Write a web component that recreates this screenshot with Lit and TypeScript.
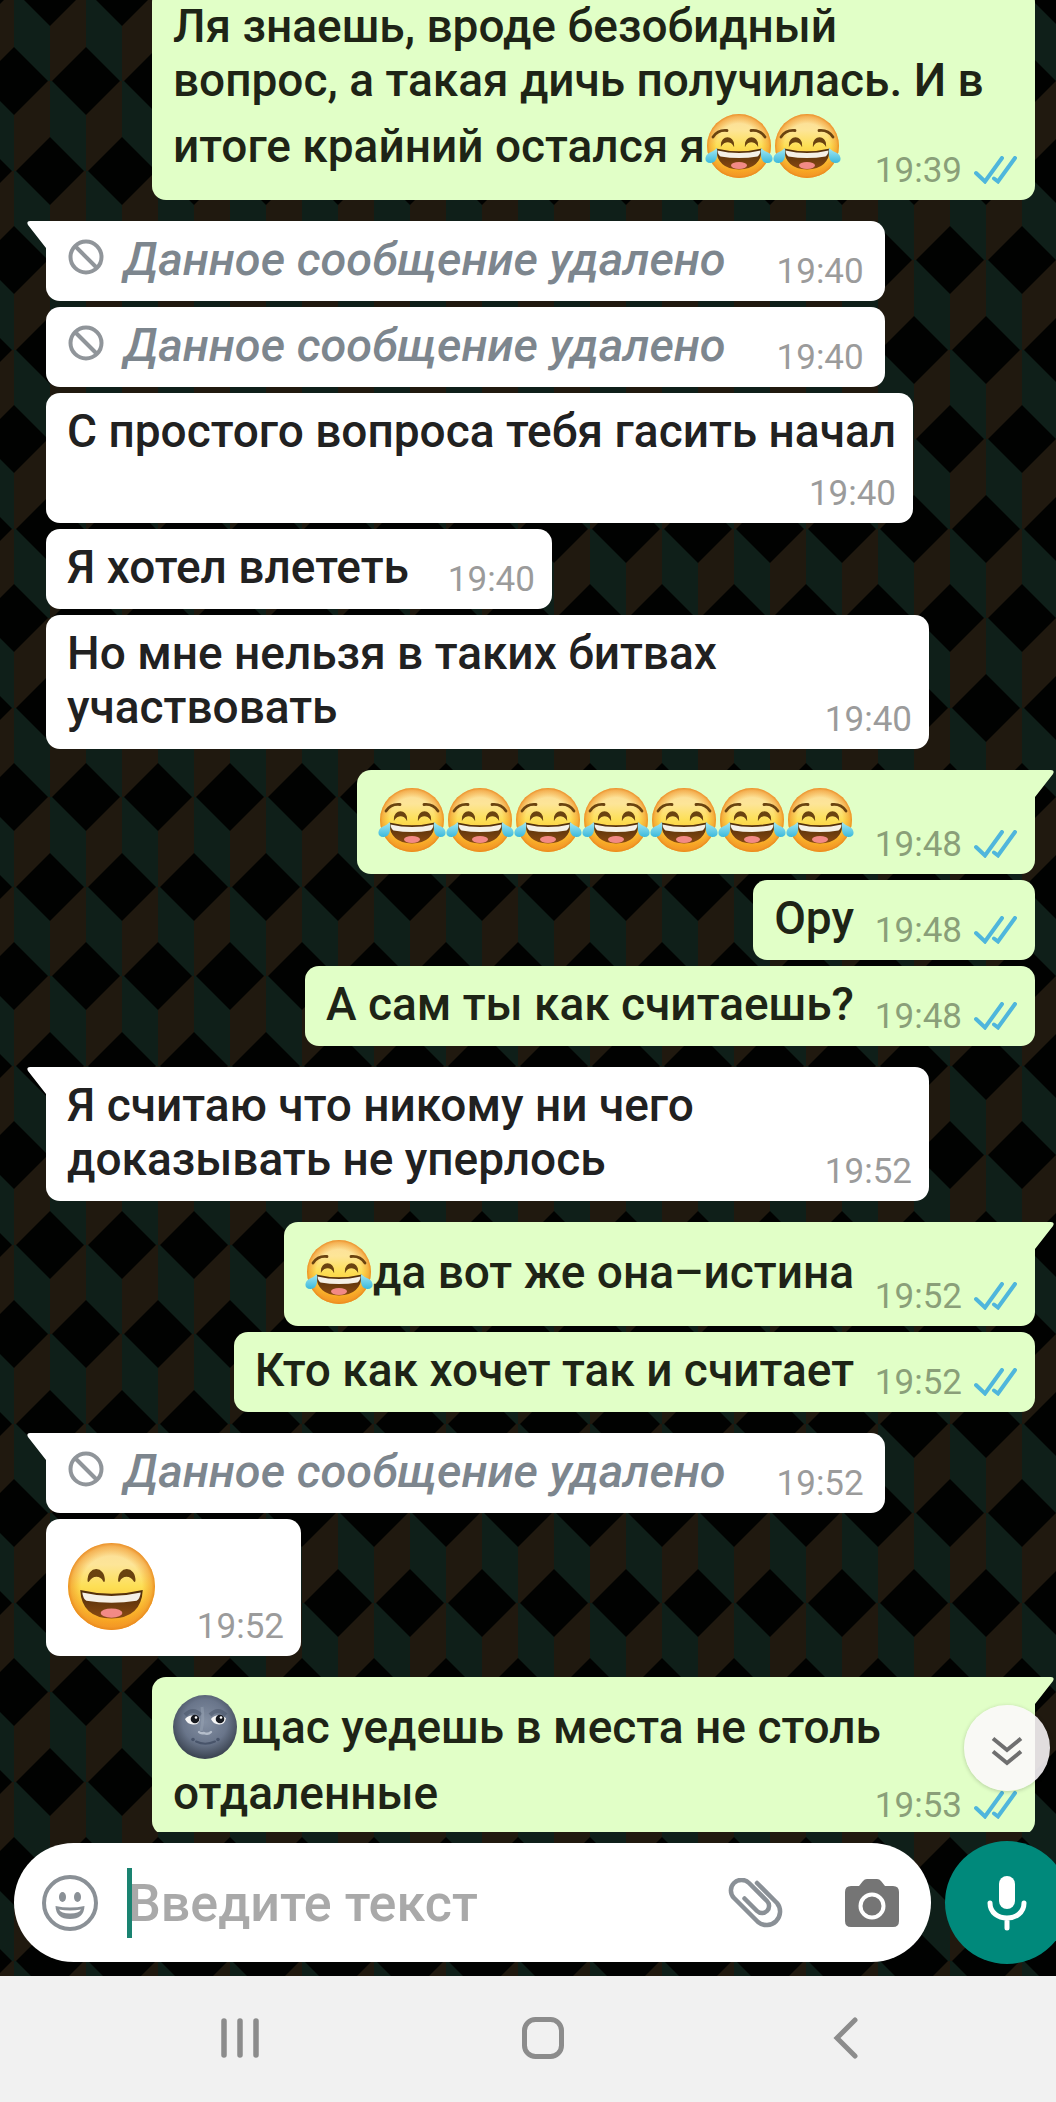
import { LitElement, html, css, svg, nothing } from "lit";
import { customElement, property } from "lit/decorators.js";
import { classMap } from "lit/directives/class-map.js";

interface Message {
  side: "in" | "out";
  time: string;
  text?: string;
  first?: boolean;
  deleted?: boolean;
  stacked?: boolean;
  big?: boolean;
  wide?: boolean;
}

const MESSAGES: Message[] = [
  { side: "out", time: "19:39", wide: true, text: "Ля знаешь, вроде безобидный\nвопрос, а такая дичь получилась. И в\nитоге крайний остался я😂😂" },
  { side: "in", time: "19:40", first: true, deleted: true },
  { side: "in", time: "19:40", deleted: true },
  { side: "in", time: "19:40", stacked: true, text: "С простого вопроса тебя гасить начал" },
  { side: "in", time: "19:40", text: "Я хотел влететь" },
  { side: "in", time: "19:40", text: "Но мне нельзя в таких битвах участвовать" },
  { side: "out", time: "19:48", first: true, text: "😂😂😂😂😂😂😂" },
  { side: "out", time: "19:48", text: "Ору" },
  { side: "out", time: "19:48", text: "А сам ты как считаешь?" },
  { side: "in", time: "19:52", first: true, text: "Я считаю что никому ни чего доказывать не уперлось" },
  { side: "out", time: "19:52", first: true, text: "😂да вот же она–истина" },
  { side: "out", time: "19:52", text: "Кто как хочет так и считает" },
  { side: "in", time: "19:52", first: true, deleted: true },
  { side: "in", time: "19:52", big: true, text: "😄" },
  { side: "out", time: "19:53", first: true, text: "🌚щас уедешь в места не столь отдаленные" },
];

const faceDefs = svg`
  <defs>
    <linearGradient id="skin" x1="0" y1="0" x2="0" y2="1">
      <stop offset="0" stop-color="#fbdc98"/><stop offset="0.25" stop-color="#fde598"/>
      <stop offset="0.5" stop-color="#fddf55"/><stop offset="0.75" stop-color="#fcc233"/><stop offset="1" stop-color="#f8981c"/>
    </linearGradient>
    <radialGradient id="rim" cx="0.5" cy="0.5" r="0.5">
      <stop offset="0.7" stop-color="#f39a1d" stop-opacity="0"/><stop offset="0.92" stop-color="#f0962a" stop-opacity="0.6"/><stop offset="1" stop-color="#e8861c" stop-opacity="0.9"/>
    </radialGradient>
    <linearGradient id="tear" x1="0" y1="0" x2="0" y2="1">
      <stop offset="0" stop-color="#a4e8f2"/><stop offset="1" stop-color="#3bb9dc"/>
    </linearGradient>
    <linearGradient id="mouth" x1="0" y1="0" x2="0" y2="1">
      <stop offset="0" stop-color="#4d2c08"/><stop offset="1" stop-color="#8a4a12"/>
    </linearGradient>
    <radialGradient id="moon" cx="0.5" cy="0.42" r="0.58">
      <stop offset="0" stop-color="#8490a3"/><stop offset="0.6" stop-color="#69758a"/><stop offset="1" stop-color="#39424f"/>
    </radialGradient>
  </defs>`;

const grin = svg`
  <circle cx="34" cy="34" r="32" fill="url(#skin)"/>
  <circle cx="34" cy="34" r="32" fill="url(#rim)"/>
  <path d="M11 36.500 Q34 42 57 36.500 Q56 57 34 57.500 Q12 57 11 36.500Z" fill="url(#mouth)"/>
  <path d="M12.500 38.500 Q34 43.500 55.500 38.500 Q55 43 52.500 44.500 Q34 47.500 15.500 44.500 Q13 43 12.500 38.500Z" fill="#f5f0e6"/>
  <ellipse cx="34" cy="53.500" rx="8" ry="3.400" fill="#f28a86"/>`;

function emoji(char: string) {
  if (char === "🌚") {
    return html`<svg class="emoji" viewBox="0 0 68 68" role="img" aria-label="🌚">${faceDefs}${svg`
      <circle cx="32" cy="34" r="32" fill="url(#moon)"/>
      <path d="M12 22 Q20 14 28 22 M37 22 Q45 14 53 22" fill="none" stroke="#465165" stroke-width="4" opacity="0.5"/>
      <path d="M29 14 Q31 26 28 38" fill="none" stroke="#98a3b4" stroke-width="3" opacity="0.5"/>
      <path d="M12 26 Q18 19 27 26 Q26 32 20 31.500 Q14 31 12 26Z M38 26 Q44 19 53 25 Q52 32 46 31.500 Q40 31 38 26Z" fill="#f5f5f5"/>
      <circle cx="22" cy="26" r="4.300" fill="#15181e"/><circle cx="47" cy="26" r="4.300" fill="#15181e"/>
      <circle cx="23" cy="24.500" r="1.300" fill="#fff"/><circle cx="48" cy="24.500" r="1.300" fill="#fff"/>
      <path d="M26 39 Q28 41 31 40 Q35 42 38 39" fill="none" stroke="#b4bdca" stroke-width="2.400" stroke-linecap="round"/>
      <path d="M23 48.500 Q32 53 42 48.500" fill="none" stroke="#48546a" stroke-width="2" stroke-linecap="round"/>
      <circle cx="20" cy="46.500" r="1.800" fill="#48546a"/><circle cx="45" cy="46.500" r="1.800" fill="#48546a"/>`}</svg>`;
  }
  if (char === "😄") {
    return html`<svg class="emoji" viewBox="2 2 64 64" role="img" aria-label="😄">${faceDefs}${grin}${svg`
      <path d="M17 30 C16.500 19 29 19 28.500 30 C26 25 20 25 17 30Z M39.500 30 C39 19 51.500 19 51 30 C48 25 42 25 39.500 30Z" fill="#6a4310" stroke="#6a4310" stroke-width="1.200" stroke-linejoin="round"/>`}</svg>`;
  }
  return html`<svg class="emoji" viewBox="0 0 68 68" role="img" aria-label="😂">${faceDefs}${grin}${svg`
    <path d="M8 25 Q13 17.500 22 18.500 M46 18.500 Q55 17.500 60 25" fill="none" stroke="#6a4310" stroke-width="2.800" stroke-linecap="round"/>
    <path d="M16.500 33 C16.500 23.500 28.500 23.500 28.500 33 C26 28.500 19.500 28.500 16.500 33Z M40.500 33 C40.500 23.500 52.500 23.500 52.500 33 C49.500 28.500 43 28.500 40.500 33Z" fill="#6a4310" stroke="#6a4310" stroke-width="1.200"/>
    <path d="M12 36 C13 46 11 51 5.500 51 C-1 51 -1 44 4 41 Q9 39 12 36Z M56 36 C55 46 57 51 62.500 51 C69 51 69 44 64 41 Q59 39 56 36Z" fill="url(#tear)"/>`}</svg>`;
}

@customElement("chat-bubble")
export class ChatBubble extends LitElement {
  @property({ attribute: false }) message!: Message;

  static styles = css`
    :host { display: flex; }
    .bubble {
      position: relative;
      display: grid;
      box-sizing: border-box;
      max-width: calc(100% - 106px);
      padding: 11px 17px 15px 21px;
      border-radius: 14px;
      background: #fff;
      color: #212121;
      font-size: 46px;
      line-height: 54px;
      font-weight: 500;
    }
    .out { margin-left: auto; padding-right: 14px; background: #e1ffc7; color: #1e2416; }
    .wide { width: 100%; }
    .deleted { padding-right: 21px; color: #7d868e; font-size: 47px; font-style: italic; }
    .in.first { border-top-left-radius: 0; }
    .out.first { border-top-right-radius: 0; }
    .text { grid-area: 1 / 1; margin: 0; }
    .line { display: block; }
    .room { display: inline-block; width: 126px; height: 1px; }
    .out .room { width: 167px; }
    .deleted .room { width: 138px; }
    .meta {
      grid-area: 1 / 1;
      align-self: end;
      justify-self: end;
      display: flex;
      align-items: center;
      gap: 12px;
      margin-bottom: -6px;
      font-size: 35px;
      line-height: 41px;
      font-weight: 400;
      font-style: normal;
      color: #9b9b9b;
    }
    .out .meta { color: #8a9f79; padding-right: 4px; }
    .stacked .meta { grid-area: 2 / 1; padding-top: 15px; }
    .ticks { width: 43px; height: 28px; margin-bottom: 2px; }
    .emoji { width: 68px; height: 68px; padding: 5px 0; vertical-align: -23px; }
    .big .emoji { width: 87px; height: 87px; padding: 0; vertical-align: top; }
    .big { padding: 24px 17px 26px 22px; }
    .big .meta { margin-bottom: -17px; }
    .big .room { width: 129px; }
    .ban { width: 36px; height: 36px; margin: 0 20px 0 1px; vertical-align: 0; }
    .tail { position: absolute; top: 0; width: 20px; height: 29px; }
    .in .tail { left: -19px; fill: #fff; }
    .out .tail { right: -19px; fill: #e1ffc7; transform: scaleX(-1); }
  `;

  private line(text: string) {
    return text.split(/(😂|😄|🌚)/u).filter(Boolean).map((part) => (/^(😂|😄|🌚)$/u.test(part) ? emoji(part) : part));
  }

  render() {
    const m = this.message;
    const room = m.stacked ? nothing : html`<span class="room"></span>`;
    const lines = (m.text ?? "").split("\n");
    const body = m.deleted
      ? html`<svg class="ban" viewBox="0 0 36 36" aria-hidden="true"><circle cx="18" cy="18" r="15.500" fill="none" stroke="#90959a" stroke-width="4"/><path d="M7 7 L29 29" stroke="#90959a" stroke-width="4"/></svg>Данное сообщение удалено${room}`
      : lines.map((text, i) => html`<span class="line">${this.line(text)}${i === lines.length - 1 ? room : nothing}</span>`);
    return html`<article class=${classMap({ bubble: true, [m.side]: true, first: !!m.first, deleted: !!m.deleted, stacked: !!m.stacked, big: !!m.big, wide: !!m.wide })}>
      ${m.first ? html`<svg class="tail" viewBox="0 0 20 29" aria-hidden="true"><path d="M20 0 H3 Q-1 0 1 4 L19 27 L20 29Z"/></svg>` : nothing}
      <p class="text">${body}</p>
      <div class="meta">
        <time>${m.time}</time>
        ${m.side === "out"
          ? html`<svg class="ticks" viewBox="0 0 43 28" role="img" aria-label="Прочитано"><path d="M2 17 L11 25.500 L28 2 M20 22.500 L24 25.500 L41 2" fill="none" stroke="#4fb6dc" stroke-width="4" stroke-linecap="round"/></svg>`
          : nothing}
      </div>
    </article>`;
  }
}

@customElement("app-root")
export class AppRoot extends LitElement {
  static styles = css`
    :host { display: block; font-family: Roboto, "Liberation Sans", sans-serif; }
    .screen { display: flex; flex-direction: column; height: 100vh; overflow: hidden; }
    .chat { position: relative; flex: 1; min-height: 0; display: flex; flex-direction: column; overflow: hidden; background: #010201; }
    .wallpaper { position: absolute; inset: 0; width: 100%; height: 100%; }
    .history { position: relative; flex: 1; min-height: 0; overflow: hidden; }
    .list { display: flex; flex-direction: column; gap: 6px; margin: -12px 0 0; padding: 0 21px 0 46px; list-style: none; }
    .turn { margin-top: 15px; }
    button { display: grid; place-items: center; margin: 0; padding: 0; border: 0; background: none; flex: none; }
    .jump {
      position: absolute; right: 6px; bottom: 41px; width: 86px; height: 86px; border-radius: 50%;
      background: rgb(252 248 252 / 88%); box-shadow: 0 1px 4px rgb(0 0 0 / 20%);
    }
    .jump svg { margin-top: 6px; }
    .composer { position: relative; display: flex; align-items: center; gap: 14px; margin-right: -13px; padding: 9px 0 12px 14px; }
    .field { flex: 1; min-width: 0; display: flex; align-items: center; height: 119px; border-radius: 60px; background: #fff; }
    .smile { width: 56px; margin: 0 29px 0 28px; }
    .caret { width: 5px; height: 70px; margin-right: -5px; background: #1a8371; z-index: 1; }
    .entry { flex: 1; min-width: 0; padding: 2px 0 0 1px; border: 0; outline: 0; background: none; font: 500 52px/70px Roboto, "Liberation Sans", sans-serif; color: #212121; }
    .entry::placeholder { color: #a9a9a9; opacity: 1; }
    .clip { width: 56px; margin-right: 61px; }
    .camera { width: 54px; margin-right: 32px; }
    .mic { width: 124px; height: 123px; border-radius: 50%; background: #00897b; }
    .nav { display: grid; grid-template-columns: repeat(3, 1fr); height: 126px; padding: 0 59px 0 89px; background: #f1f1f1; }
    .nav button { padding-bottom: 2px; }
  `;

  render() {
    return html`<main class="screen">
      <section class="chat">
        <svg class="wallpaper" aria-hidden="true">
          <defs>
            <pattern id="cubes" x="14" y="-8" width="72" height="179" patternUnits="userSpaceOnUse">
              <rect width="72" height="179" fill="#20190f"/>
              <path d="M0 0 H36 V89 H0Z M36 89 H72 V179 H36Z" fill="#0f1f19"/>
              <path d="M0 55 L34 89 L0 123Z M72 55 V123 L38 89Z M2 0 H70 L36 34Z M2 179 L36 145 L70 179Z" fill="#010201"/>
            </pattern>
          </defs>
          <rect width="100%" height="100%" fill="url(#cubes)"/>
        </svg>
        <div class="history">
          <ul class="list">
            ${MESSAGES.map((m) => html`<li class=${m.first ? "turn" : ""}><chat-bubble .message=${m}></chat-bubble></li>`)}
          </ul>
          <button class="jump" aria-label="Вниз">
            <svg width="34" height="32" viewBox="0 0 34 32"><path d="M3 3.500 L17 15 L31 3.500 M3 16.500 L17 28 L31 16.500" fill="none" stroke="#6f6f6f" stroke-width="4"/></svg>
          </button>
        </div>
        <form class="composer" @submit=${(e: Event) => e.preventDefault()}>
          <div class="field">
            <button type="button" class="smile" aria-label="Эмодзи">
              <svg width="56" height="56" viewBox="0 0 56 56"><circle cx="28" cy="28" r="26" fill="none" stroke="#8a9096" stroke-width="4"/><ellipse cx="20.500" cy="22" rx="3.500" ry="5" fill="#8a9096"/><ellipse cx="35.500" cy="22" rx="3.500" ry="5" fill="#8a9096"/><path d="M13.500 31 Q28 34 42.500 31 Q42 44 28 44 Q14 44 13.500 31Z" fill="#8a9096"/><path d="M17 34.500 Q28 36.500 39 34.500 Q37 38.500 28 38.500 Q19 38.500 17 34.500Z" fill="#fff"/></svg>
            </button>
            <span class="caret"></span>
            <input class="entry" type="text" aria-label="Сообщение" placeholder="Введите текст">
            <button type="button" class="clip" aria-label="Прикрепить">
              <svg width="56" height="50" viewBox="0 0 56 50"><path d="M29 5 L49 25 A13.500 13.500 0 0 1 30 44 L6 20 A10.600 10.600 0 0 1 21 5 L39 23 A7 7 0 0 1 29 33 L16.500 20.500" fill="none" stroke="#8a9096" stroke-width="4.500" stroke-linecap="round" stroke-linejoin="round"/></svg>
            </button>
            <button type="button" class="camera" aria-label="Камера">
              <svg width="54" height="48" viewBox="0 0 54 48"><path fill="#757575" d="M6 7 H14 L18 2 Q19.500 0 22 0 H32 Q34.500 0 36 2 L40 7 H48 Q54 7 54 13 V42 Q54 48 48 48 H6 Q0 48 0 42 V13 Q0 7 6 7Z"/><circle cx="27" cy="27" r="11.500" fill="none" stroke="#fff" stroke-width="4"/></svg>
            </button>
          </div>
          <button type="button" class="mic" aria-label="Голосовое сообщение">
            <svg width="40" height="56" viewBox="0 0 40 56"><rect x="12" y="1" width="16" height="33" rx="8" fill="#fff"/><path d="M3 28 C3 48 37 48 37 28 M20 43 V53" fill="none" stroke="#fff" stroke-width="5" stroke-linecap="round"/></svg>
          </button>
        </form>
      </section>
      <nav class="nav">
        <button aria-label="Недавние"><svg width="40" height="42" viewBox="0 0 40 42"><path d="M4 4 V38 M20 4 V38 M36 4 V38" stroke="#8c8c8c" stroke-width="5.500" stroke-linecap="round"/></svg></button>
        <button aria-label="Домой"><svg width="42" height="42" viewBox="0 0 42 42"><rect x="2.500" y="2.500" width="37" height="37" rx="11" fill="none" stroke="#8c8c8c" stroke-width="5"/></svg></button>
        <button aria-label="Назад"><svg width="26" height="42" viewBox="0 0 26 42"><path d="M22 3 L4 21 L22 39" fill="none" stroke="#8c8c8c" stroke-width="5" stroke-linecap="round"/></svg></button>
      </nav>
    </main>`;
  }
}
